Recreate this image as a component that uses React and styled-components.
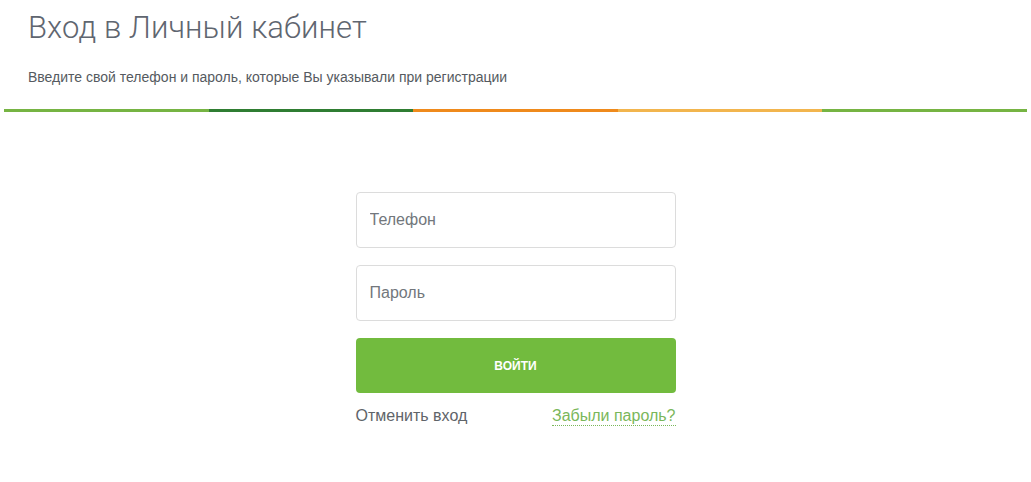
import React from "react";
import styled, { createGlobalStyle } from "styled-components";

const GlobalStyle = createGlobalStyle`
  body {
    margin: 0;
    background: #fff;
    font-family: "Liberation Sans", Arial, sans-serif;
  }
`;

const stripes = ["#76b443", "#2f7d32", "#ef8a1c", "#f2b54e", "#76b443"];

const Page = styled.div`
  width: 1031px;
  min-height: 482px;
`;

const Header = styled.header`
  padding: 10px 28px 0;
`;

const Title = styled.h1`
  margin: 0;
  font-family: "Roboto", sans-serif;
  font-weight: 300;
  font-size: 31px;
  line-height: 36px;
  letter-spacing: 0.1px;
  color: #5f6670;
`;

const Subtitle = styled.p`
  margin: 23px 0 0;
  font-size: 14px;
  line-height: 16px;
  color: #555a60;
`;

const Stripe = styled.div`
  display: flex;
  margin: 24px 4px 0;
  height: 3px;
`;

const StripePart = styled.div`
  flex: 1;
  background: ${(p) => p.$color};
`;

const Form = styled.form`
  width: 320px;
  margin: 80px auto 0;
  display: flex;
  flex-direction: column;
`;

const Field = styled.input`
  box-sizing: border-box;
  height: 56px;
  margin-bottom: 17px;
  padding: 0 13px;
  border: 1px solid #dcdcdc;
  border-radius: 4px;
  font-family: "Liberation Sans", Arial, sans-serif;
  font-size: 16px;
  color: #333;
  outline: none;
  &::placeholder {
    color: #72777c;
  }
`;

const Submit = styled.button`
  height: 55px;
  border: none;
  border-radius: 4px;
  background: #72bb3e;
  color: #fff;
  font-family: "Liberation Sans", Arial, sans-serif;
  font-weight: bold;
  font-size: 12px;
  text-transform: uppercase;
  cursor: pointer;
`;

const Links = styled.div`
  display: flex;
  justify-content: space-between;
  align-items: baseline;
  margin-top: 14px;
  font-size: 16px;
`;

const Cancel = styled.a`
  color: #5f6469;
  text-decoration: none;
`;

const Forgot = styled.a`
  color: #7ab75a;
  text-decoration: none;
  border-bottom: 1px dotted #7ab75a;
`;

export default function App() {
  return (
    <Page>
      <GlobalStyle />
      <Header>
        <Title>Вход в Личный кабинет</Title>
        <Subtitle>Введите свой телефон и пароль, которые Вы указывали при регистрации</Subtitle>
      </Header>
      <Stripe>
        {stripes.map((c, i) => (
          <StripePart key={i} $color={c} />
        ))}
      </Stripe>
      <Form onSubmit={(e) => e.preventDefault()}>
        <Field type="tel" placeholder="Телефон" />
        <Field type="password" placeholder="Пароль" />
        <Submit type="submit">Войти</Submit>
        <Links>
          <Cancel href="#">Отменить вход</Cancel>
          <Forgot href="#">Забыли пароль?</Forgot>
        </Links>
      </Form>
    </Page>
  );
}
